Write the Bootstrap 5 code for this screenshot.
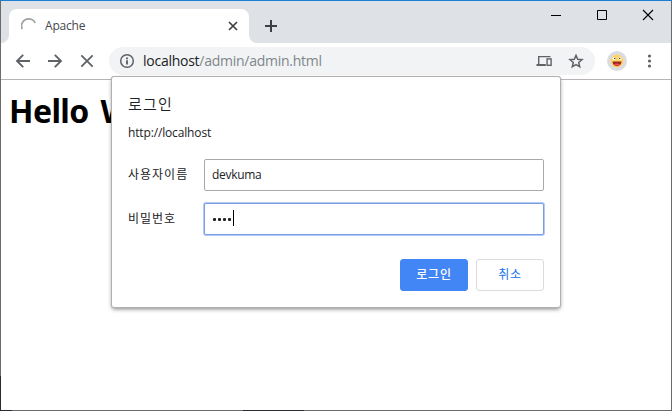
<!DOCTYPE html>
<html lang="ko">
<head>
<meta charset="utf-8">
<meta name="viewport" content="width=device-width, initial-scale=1">
<title>Apache</title>
<link rel="stylesheet" href="https://cdn.jsdelivr.net/npm/bootstrap@5.3.0/dist/css/bootstrap.min.css">
<style>
body{font-family:"Open Sans","Noto Sans CJK KR",sans-serif;font-size:12px;line-height:16px;color:#202124;background:#fff}
svg{display:block;flex:none}
.window{width:672px;height:411px;border:1px solid #6b6b6b;border-top-color:#1a7fd4}
.edge{background:#252a33;z-index:3}
.edge-left{left:0;top:376px;width:1px;height:35px}
.edge-corner{left:0;top:410px;width:12px;height:1px}
.edge-bottom{left:243px;top:410px;width:61px;height:1px}
.tabstrip{height:42px;background:#dee1e6}
.strip-start{width:8px;background:#fff}
.strip-start span{display:block;height:34px;background:#dee1e6;border-bottom-right-radius:8px}
.strip-rest{background:#fff}
.strip-inner{height:34px;background:#dee1e6;border-bottom-left-radius:8px}
.browser-tab{width:240px;height:34px;background:#fff;border-radius:8px 8px 0 0;padding-left:12px;padding-right:11px}
.tab-title{color:#45494d;letter-spacing:-.2px;margin-left:8px}
.tab-row{padding-top:8px;background:#dee1e6}
.caption-btns{margin-top:-8px;padding-top:8px;padding-right:17px;gap:34px}
.toolbar{height:37px;border-bottom:1px solid #b6b4b6;padding:4px 14px 4px 14px}
.omnibox{width:486px;height:28px;border-radius:14px;background:#f1f3f4;margin-left:14px;padding-left:10px;padding-right:11px}
.url{font-size:14px;letter-spacing:-.26px;margin-left:8px;color:#80868b;line-height:20px}
.url span{color:#202124}
.avatar-disc{width:20px;height:20px;border-radius:50%;background:#dadce0;margin-left:12px}
.page-main{width:112px}
.page-title{font-family:"Noto Sans",sans-serif;font-weight:700;font-size:32px;line-height:44px;color:#000;margin:9px 0 0 8px;letter-spacing:-.6px;word-spacing:4px;white-space:nowrap}
.auth{left:112px;top:77px;width:448px;height:230px;border-radius:2px;background:#fff;box-shadow:0 0 0 1px #b0b0b0,0 2px 4px rgba(0,0,0,.5);padding:16px;z-index:2}
.auth h2{font-family:"Noto Sans CJK KR",sans-serif;font-size:15px;line-height:22px;font-weight:350;margin:0;letter-spacing:1.2px;color:#202124}
.origin{margin-top:10px;letter-spacing:-.15px}
.field-row1{margin-top:18px}
.field-row2{margin-top:12px}
.field-label{width:76px;letter-spacing:1px;color:#202124}
.auth .form-control{height:32px;width:340px;padding:0 7px;border:1px solid #a9a9a9;border-radius:2px;font-size:12px;line-height:30px;color:#202124;letter-spacing:-.3px;background:#fff}
.auth .user{padding-bottom:2px}
.auth .pw{border-color:#7a9ee0;box-shadow:0 0 0 1px #b3cbf6}
.dots{gap:2px;padding:1px 1px 0 1px}
.dots i{width:3px;height:3px;border-radius:1px;background:#202124}
.dots{gap:2px}
.caret{width:1px;height:16px;background:#000;margin:0 0 3px 1px}
.auth .btn{width:68px;height:32px;padding:0;border-radius:3px;font-size:12px;line-height:30px;letter-spacing:.8px}
.auth .btn-login{background:#4285f4;color:#fff;border-color:#4285f4;font-weight:500}
.auth .btn-cancel{background:#fff;color:#1a73e8;border-color:#dadce0}
</style>
</head>
<body class="overflow-hidden">
<div class="window position-relative overflow-hidden">
  <header>
    <div class="tabstrip d-flex">
      <div class="tab-row d-flex flex-fill">
        <div class="strip-start"><span></span></div>
        <div class="browser-tab d-flex align-items-center">
          <svg width="16" height="16" viewBox="0 0 16 16" fill="none" stroke="#a0a2a5" stroke-width="1.7"><path d="M1.2 11.2A7 7 0 0 1 14.3 5"/></svg>
          <span class="tab-title">Apache</span>
          <svg class="ms-auto" width="10" height="10" viewBox="0 0 10 10" stroke="#3c4043" stroke-width="1.7"><path d="M1 1l8 8M9 1L1 9"/></svg>
        </div>
        <div class="strip-rest flex-fill"><div class="strip-inner d-flex align-items-center ps-3">
          <svg width="12" height="12" viewBox="0 0 12 12" stroke="#3c4043" stroke-width="2"><path d="M6 0v12M0 6h12"/></svg>
          <div class="caption-btns d-flex ms-auto align-self-start">
            <svg width="12" height="12" viewBox="0 0 12 12" stroke="#000"><path d="M1 6.5h10"/></svg>
            <svg width="12" height="12" viewBox="0 0 12 12" fill="none" stroke="#000"><path d="M1.5 1.5h9v9h-9z"/></svg>
            <svg width="12" height="12" viewBox="0 0 12 12" stroke="#000" stroke-width="1.1"><path d="M1 1l10 10M11 1L1 11"/></svg>
          </div>
        </div></div>
      </div>
    </div>
    <div class="toolbar d-flex align-items-center">
      <svg width="16" height="16" viewBox="0 0 16 16" fill="none" stroke="#5f6368" stroke-width="1.9"><path d="M15 8H2.2M8.2 1.8L2 8l6.2 6.2"/></svg>
      <svg class="ms-3" width="16" height="16" viewBox="0 0 16 16" fill="none" stroke="#5f6368" stroke-width="1.9"><path d="M1 8h12.8M7.8 1.8L14 8l-6.2 6.2"/></svg>
      <svg class="ms-3" width="16" height="16" viewBox="0 0 16 16" stroke="#5f6368" stroke-width="1.8"><path d="M2.3 2.3l11.4 11.4M13.7 2.3L2.3 13.7"/></svg>
      <div class="omnibox d-flex align-items-center">
        <svg width="16" height="16" viewBox="0 0 16 16" fill="none" stroke="#5f6368"><circle cx="8" cy="8" r="6.3" stroke-width="1.5"/><path d="M8 7.2v4.3M8 4.5v1.7" stroke-width="1.9"/></svg>
        <span class="url"><span>localhost</span>/admin/admin.html</span>
        <svg class="ms-auto" width="16" height="16" viewBox="0 0 16 16" fill="none" stroke="#5f6368"><path d="M2.7 11V3.6H14.5" stroke-width="1.4"/><path d="M.5 12h9.3" stroke-width="2"/><rect x="11.1" y="5.9" width="4" height="6.4" stroke-width="1.4"/></svg>
        <svg class="ms-3" width="16" height="16" viewBox="0 0 16 16" fill="none" stroke="#5f6368" stroke-width="1.5"><path d="M8 2.3l1.7 4 4.3.4-3.3 2.8 1 4.2L8 11.5l-3.7 2.2 1-4.2L2 6.7l4.3-.4z"/></svg>
      </div>
      <div class="avatar-disc d-flex align-items-center justify-content-center">
        <svg width="14" height="14" viewBox="0 0 14 14"><circle cx="7" cy="7" r="6.4" fill="#ffd365"/><circle cx="4" cy="4.6" r="1.5" fill="#fff"/><circle cx="10" cy="4.6" r="1.5" fill="#fff"/><circle cx="4.7" cy="4.4" r=".7" fill="#3c3428"/><circle cx="9.7" cy="4.4" r=".7" fill="#3c3428"/><path d="M2.5 7.5h9c0 6.2-9 6.2-9 0z" fill="#9d2525"/><path d="M4 10.4q3-2 6 0-3 2.4-6 0z" fill="#f25050"/></svg>
      </div>
      <svg class="ms-auto" width="16" height="16" viewBox="0 0 16 16" fill="#5f6368"><circle cx="8.5" cy="3" r="1.6"/><circle cx="8.5" cy="8" r="1.6"/><circle cx="8.5" cy="13" r="1.6"/></svg>
    </div>
  </header>
  <main class="page-main overflow-hidden"><h1 class="page-title">Hello W</h1></main>
</div>
<div class="edge edge-left position-absolute"></div>
<div class="edge edge-corner position-absolute"></div>
<div class="edge edge-bottom position-absolute"></div>
<form class="auth position-absolute">
  <h2>로그인</h2>
  <div class="origin">http://localhost</div>
  <div class="field-row1 d-flex align-items-center">
    <label class="field-label">사용자이름</label>
    <input class="form-control user" type="text" value="devkuma">
  </div>
  <div class="field-row2 d-flex align-items-center">
    <label class="field-label">비밀번호</label>
    <div class="form-control pw d-flex align-items-center">
      <span class="dots d-flex"><i></i><i></i><i></i><i></i></span><span class="caret"></span>
    </div>
  </div>
  <div class="d-flex justify-content-end gap-2 mt-4">
    <button type="button" class="btn btn-login">로그인</button>
    <button type="button" class="btn btn-cancel">취소</button>
  </div>
</form>
<script src="https://cdn.jsdelivr.net/npm/bootstrap@5.3.0/dist/js/bootstrap.bundle.min.js"></script>
</body>
</html>
